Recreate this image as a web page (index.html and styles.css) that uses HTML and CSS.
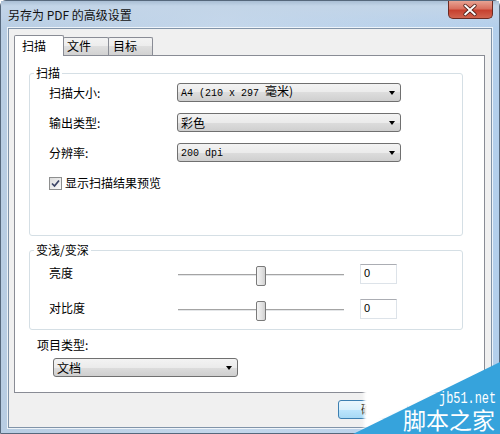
FILE: index.html
```html
<!DOCTYPE html>
<html>
<head>
<meta charset="utf-8">
<link rel="stylesheet" href="styles.css">
</head>
<body>
<div class="window">
  <div class="titlebar">
    <span class="title">另存为 PDF 的高级设置</span>
    <div class="close">
      <svg width="45" height="18" viewBox="0 0 45 18">
        <path d="M17.5 4.5 L27.5 13.5 M27.5 4.5 L17.5 13.5" stroke="#4a1a14" stroke-width="3.6" stroke-linecap="round"/>
        <path d="M17.5 4.5 L27.5 13.5 M27.5 4.5 L17.5 13.5" stroke="#fff" stroke-width="2" stroke-linecap="round"/>
      </svg>
    </div>
  </div>
  <div class="client">
    <div class="tabs">
      <div class="tab active">扫描</div>
      <div class="tab t2">文件</div>
      <div class="tab t3">目标</div>
    </div>
    <div class="panel">
      <fieldset class="group g1">
        <legend>扫描</legend>
        <div class="rows">
          <div class="row">
            <span class="label">扫描大小:</span>
            <div class="select wide"><span class="val"><span class="lat">A4 (210 x 297 </span>毫米)</span><span class="arrow"></span></div>
          </div>
          <div class="row">
            <span class="label">输出类型:</span>
            <div class="select wide"><span class="val">彩色</span><span class="arrow"></span></div>
          </div>
          <div class="row">
            <span class="label">分辨率:</span>
            <div class="select wide"><span class="val"><span class="lat">200 dpi</span></span><span class="arrow"></span></div>
          </div>
        </div>
        <div class="check">
          <span class="box">
            <svg width="11" height="11" viewBox="0 0 11 11"><path d="M2 5.5 L4.5 8 L9 2.5" fill="none" stroke="#3b4466" stroke-width="1.7"/></svg>
          </span>
          <span>显示扫描结果预览</span>
        </div>
      </fieldset>
      <fieldset class="group g2">
        <legend>变浅/变深</legend>
        <div class="srow">
          <span class="slabel">亮度</span>
          <div class="slider"><span class="thumb"></span></div>
          <div class="num">0</div>
        </div>
        <div class="srow second">
          <span class="slabel">对比度</span>
          <div class="slider"><span class="thumb"></span></div>
          <div class="num">0</div>
        </div>
      </fieldset>
      <div class="ptype">项目类型:</div>
      <div class="select narrow"><span class="val">文档</span><span class="arrow"></span></div>
    </div>
    <div class="buttons">
      <div class="btn default">确定</div>
    </div>
  </div>
</div>
<svg class="mark" width="500" height="434" viewBox="0 0 500 434">
  <defs><filter id="bl" x="-20%" y="-20%" width="140%" height="140%"><feGaussianBlur stdDeviation="1.5"/></filter></defs>
  <polygon points="364,386 462,381 356,434 364,434" fill="#ffffff" filter="url(#bl)"/>
  <polygon points="500,362 353,434 500,434" fill="#36a3dc"/>
  <text x="439" y="403" class="mark-en" textLength="57" lengthAdjust="spacingAndGlyphs">jb51.net</text>
  <text x="403" y="429" class="mark-cn">脚本之家</text>
</svg>
</body>
</html>
```

FILE: styles.css
```css
html, body {
  margin: 0;
  padding: 0;
}
body {
  width: 500px;
  height: 434px;
  overflow: hidden;
  position: relative;
  font-family: "Noto Sans CJK SC", "Noto Sans", sans-serif;
  font-size: 12px;
  color: #000;
}
.window {
  box-sizing: border-box;
  height: 434px;
  display: flex;
  flex-direction: column;
  border: 1px solid #56687c;
  border-radius: 6px 6px 0 0;
  background: linear-gradient(90deg, #b8cde3 0%, #c4d7eb 45%, #b3cfec 100%);
}
.titlebar {
  height: 27px;
  flex: none;
  display: flex;
  justify-content: space-between;
  align-items: flex-start;
  padding-left: 7px;
  background: linear-gradient(#a9bed4 0, #c3d5e8 5px, rgba(255,255,255,0) 27px);
}
.title {
  line-height: 16px;
  margin-top: 6px;
  color: #111;
}
.close {
  width: 45px;
  height: 18px;
  margin-right: 6px;
  box-sizing: border-box;
  border: 1px solid #6b2a22;
  border-top: none;
  border-radius: 0 0 5px 5px;
  background: linear-gradient(#e8a393 0%, #d9705f 45%, #c7412f 55%, #d2644f 100%);
  display: flex;
}
.close svg {
  margin-left: -1px;
}
.client {
  flex: 1;
  margin: 0 7px 5px 7px;
  border: 1px solid #8194a9;
  box-shadow: 0 0 0 1px rgba(255,255,255,0.75);
  background: #f0f0f0;
  display: flex;
  flex-direction: column;
  padding: 6px 6px 0 5px;
}
.tabs {
  display: flex;
  align-items: flex-end;
  height: 21px;
  margin-bottom: -1px;
  position: relative;
  z-index: 1;
}
.tab {
  box-sizing: border-box;
  height: 18px;
  margin-bottom: 1px;
  line-height: 16px;
  border: 1px solid #898c95;
  border-bottom: none;
  border-radius: 2px 2px 0 0;
  background: linear-gradient(#f3f3f3 0%, #ececec 50%, #dedede 50%, #d2d2d2 100%);
  padding-left: 3px;
}
.tab.active {
  height: 21px;
  margin-bottom: 0;
  width: 50px;
  background: #fff;
  padding-left: 7px;
  line-height: 19px;
  position: relative;
  z-index: 2;
}
.tab.t2 {
  width: 46px;
  margin-left: -1px;
}
.tab.t3 {
  width: 45px;
  margin-left: -1px;
  padding-left: 4px;
}
.panel {
  box-sizing: border-box;
  height: 338px;
  flex: none;
  border: 1px solid #898c95;
  background: #fff;
  padding: 9px 21px 0 14px;
}
.group {
  margin: 0;
  min-width: 0;
  border: 1px solid #d5dfe5;
  border-radius: 3px;
  padding: 2px 0 44px 0;
}
.group legend {
  padding: 0 2px;
  margin-left: 4px;
  line-height: 16px;
}
.rows {
  display: flex;
  flex-direction: column;
  gap: 11px;
  padding-left: 19px;
}
.row {
  display: flex;
  align-items: center;
  height: 19px;
}
.label {
  width: 128px;
  flex: none;
  line-height: 16px;
}
.select {
  box-sizing: border-box;
  height: 19px;
  display: flex;
  align-items: center;
  justify-content: space-between;
  border: 1px solid #707070;
  border-radius: 3px;
  background: linear-gradient(#f3f3f3 0%, #ebebeb 50%, #dddddd 50%, #cfcfcf 100%);
  padding: 0 5px 0 3px;
  line-height: 16px;
}
.select.wide {
  width: 224px;
}
.select.narrow {
  width: 185px;
  margin: 5px 0 0 24px;
}
.lat {
  font-family: "Liberation Mono", monospace;
  font-size: 10px;
}
.arrow {
  width: 0;
  height: 0;
  border-left: 3.5px solid transparent;
  border-right: 3.5px solid transparent;
  border-top: 4px solid #000;
}
.check {
  display: flex;
  align-items: center;
  height: 16px;
  margin-top: 13px;
  padding-left: 19px;
  line-height: 16px;
}
.box {
  box-sizing: border-box;
  width: 13px;
  height: 13px;
  border: 1px solid #8e8f8f;
  background: linear-gradient(135deg, #dcdcdc, #fbfbfb);
  margin-right: 3px;
  display: flex;
  align-items: center;
  justify-content: center;
}
.g2 {
  margin-top: 6px;
  padding: 6px 0 8px 19px;
}
.g2 legend {
  margin-left: -15px;
}
.srow {
  display: flex;
  align-items: flex-start;
  height: 22px;
}
.srow.second {
  margin-top: 13px;
}
.slabel {
  width: 129px;
  flex: none;
  line-height: 18px;
}
.slider {
  width: 166px;
  height: 22px;
  flex: none;
  display: flex;
  justify-content: center;
  background: linear-gradient(#fff 0, #fff 10px, #a4a4a4 10px, #a4a4a4 11px, #e4e6e8 11px, #e4e6e8 12px, #fff 12px);
}
.thumb {
  box-sizing: border-box;
  width: 10px;
  height: 20px;
  margin-top: 2px;
  border: 1px solid #7a7a7a;
  border-radius: 2px;
  background: linear-gradient(90deg, #f4f4f4, #e2e2e2 60%, #d0d0d0);
}
.num {
  box-sizing: border-box;
  width: 37px;
  height: 20px;
  margin-left: 16px;
  border: 1px solid #dde3e9;
  border-top-color: #abadb3;
  padding-left: 3px;
  font-family: "Liberation Sans", sans-serif;
  font-size: 11px;
  line-height: 17px;
}
.ptype {
  margin-top: 7px;
  padding-left: 8px;
  line-height: 16px;
}
.buttons {
  display: flex;
  justify-content: flex-end;
  margin-top: 7px;
  padding-right: 77px;
}
.btn {
  box-sizing: border-box;
  width: 70px;
  height: 19px;
  border: 1px solid #707070;
  border-radius: 3px;
  background: linear-gradient(#f2f2f2 0%, #ebebeb 50%, #dddddd 50%, #cfcfcf 100%);
  text-align: center;
  line-height: 16px;
}
.btn.default {
  border-color: #3c7fb1;
  background: linear-gradient(#eaf6fd 0%, #d9f0fc 50%, #bee6fd 50%, #a7d9f5 100%);
}
.mark {
  position: absolute;
  left: 0;
  top: 0;
  pointer-events: none;
}
.mark-en {
  font-family: "Liberation Mono", monospace;
  font-size: 16px;
  fill: #fff;
}
.mark-cn {
  font-family: "Noto Sans CJK SC", sans-serif;
  font-size: 23px;
  fill: #fff;
}
```
